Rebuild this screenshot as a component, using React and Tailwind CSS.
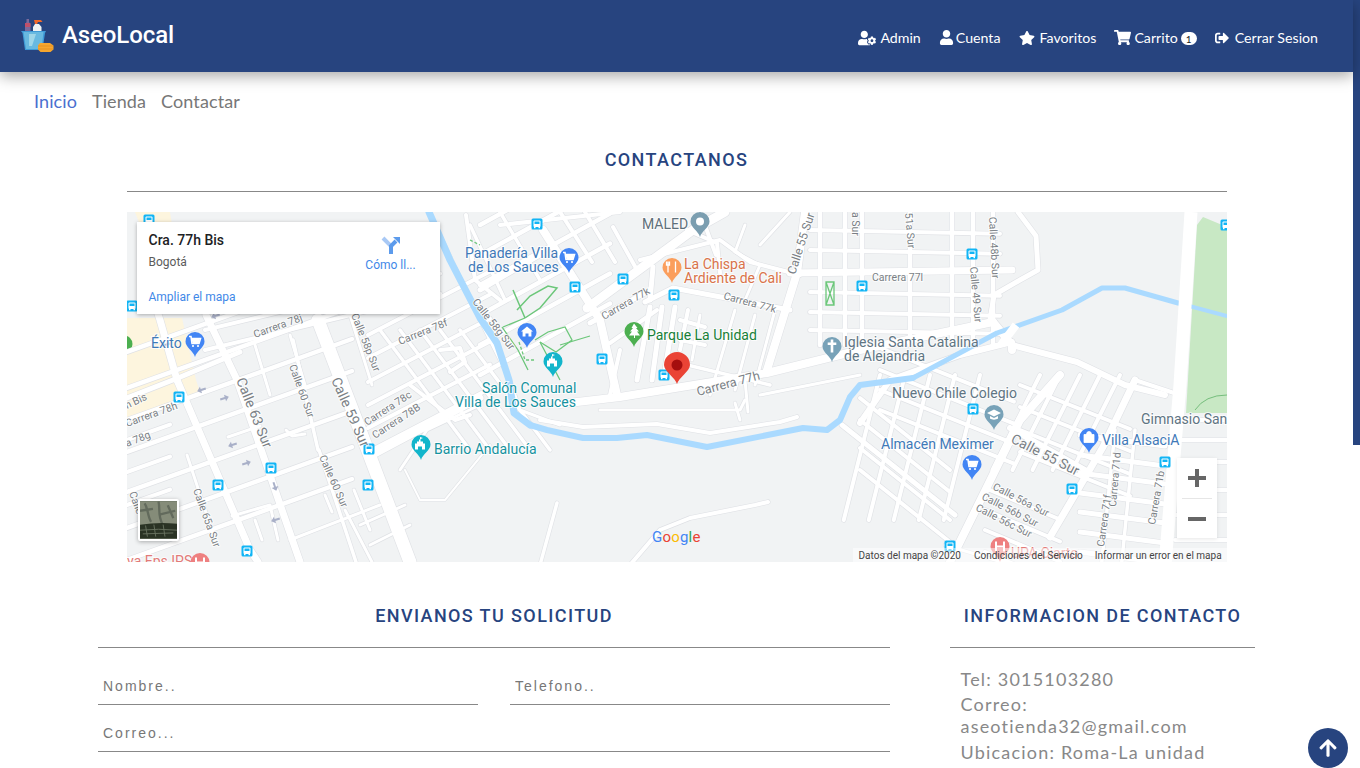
import React from "react";
import { FaUserCog, FaUser, FaStar, FaShoppingCart, FaSignOutAlt, FaArrowUp } from "react-icons/fa";

const lines = (ys, x1, x2, s, w) => ys.map((y) => [`M${x1} ${y}L${x2} ${y + s * (x2 - x1)}`, w]);
const vlines = (xs, y1, y2, s, w) => xs.map((x) => [`M${x} ${y1}L${x + s * (y2 - y1)} ${y2}`, w]);

const ROADS = [
  // left quarter
  ...lines([352, 388, 420, 452, 492, 528, 560], 127, 352, -0.36, 4.5),
  ...lines([330, 350], 205, 440, -0.24, 4),
  ...lines([440, 472, 505], 127, 170, -0.36, 4),
  ["M228 437L260 426", 3],
  ["M286 430L292 436L305 434", 3],
  ["M187 455L215 540", 3],
  ["M319 450L356 562", 3.5],
  ["M293 340L318 450", 3.5],
  ["M325 495L332 512", 3],
  ["M354 490L370 530", 3],
  ["M232 516L270 505L278 540", 3],
  ["M255 520L262 540", 3],
  ["M290 540L380 505", 3],
  ["M345 510L372 562", 3],
  ["M360 525L405 505", 3],
  ["M370 545L410 525", 3],
  ["M177 380L160 320L150 290", 7],
  ["M177 380L250 550L258 562", 7],
  ["M206 315L237 380L300 562", 7],
  ["M318 320L360 430L410 562", 13],
  ["M127 398L178 378L240 352", 5],
  ["M350 315L372 385", 3],
  ["M255 345L270 395", 3],
  ["M290 335L305 385", 3],
  // centre-left
  ...lines([452, 428, 405, 382, 358, 335], 368, 490, -0.52, 4),
  ...vlines([380, 400, 420, 440, 460], 330, 450, 0.75, 3.5),
  ["M410 385L455 420L470 415", 4],
  ["M400 470L427 430L480 405", 3],
  ["M405 470L420 500L445 500L490 445", 2],
  ["M373 455L480 398", 7],
  ["M440 350L460 348L465 362L450 372", 4],
  ["M466 215L475 280L500 300", 4],
  ["M440 235L480 320L510 380L520 410L560 425", 3],
  // centre top
  ["M587 308L693 230L725 212", 9],
  ...lines([255, 225, 285, 315, 345, 375], 480, 610, -0.55, 4.5),
  ["M500 225L620 212", 4],
  ["M543 230L600 320L617 395", 8],
  ["M480 290L543 253", 5],
  ["M470 225L505 300", 3.5],
  ["M500 212L540 280", 3.5],
  ["M560 212L592 262", 4],
  ["M585 212L615 262", 4],
  ["M613 227L637 270", 4],
  ["M590 323L650 290", 5],
  ["M610 343L657 310", 4],
  ["M653 267L650 300", 5],
  ["M650 307L637 380", 5],
  ["M662 307L652 380", 5],
  ["M675 307L665 370", 5],
  ["M620 350L610 395", 4],
  ["M688 310L680 350", 4],
  ["M700 315L692 360", 3],
  ["M645 302L673 288L790 310", 5],
  ["M680 320L705 327", 4],
  ["M680 340L705 345", 4],
  ["M675 362L770 385", 3.5],
  ["M687 230L717 243L720 273", 4],
  ["M640 260L720 240L750 262L800 275", 4],
  ["M700 212L716 255", 4],
  ["M735 310L710 395", 3],
  ["M755 315L735 390", 3],
  ["M775 310L755 385", 3],
  ["M760 245L790 212", 3],
  ["M745 225L735 252L760 265L745 300", 3],
  // Carrera 77h
  ["M560 404L620 397L767 373L860 350L993 322", 8],
  ["M600 410L740 410L745 400", 3],
  ["M735 403L740 420", 3],
  ["M540 420L583 427L657 424L710 433L780 422L797 417", 4],
  ["M760 395L860 375", 3],
  ["M745 380L748 412", 3],
  // calle 55
  ["M805 212L797 273L767 370", 8],
  ["M790 273L1012 270", 7],
  // upper-right grid
  ...vlines([820, 845, 862, 910, 952, 973, 993], 212, 345, 0, 4.5),
  ...lines([230, 250, 292, 312, 330], 810, 1000, 0.02, 4),
  ["M1018 212L1036 236L1038 270L1020 280L994 295L990 320", 5],
  ["M993 322L1012 345L1012 350", 8],
  ["M1012 345L1077 362L1125 385L1165 395", 6],
  ["M860 423L890 380L960 355L1012 342", 6],
  // lower right
  ["M950 562L1020 420L1060 375", 8],
  ["M842 425L955 515", 5],
  ["M1050 537L1103 447L1135 380", 7],
  ["M1010 428L1085 470", 6],
  ["M1135 380L1180 395", 4],
  ...lines([348, 370, 390, 410], 880, 1014, 0.4, 4),
  ...lines([398, 420, 448, 470], 860, 950, 0.8, 4),
  ...vlines([880, 905, 930, 955, 980], 375, 520, -0.25, 4),
  ...lines([385, 407, 430, 452], 1020, 1130, 0.4, 4),
  ...vlines([1040, 1060, 1080, 1100, 1120], 375, 470, -0.5, 4),
  ...lines([488, 510, 530, 552], 985, 1060, 0.42, 4),
  ...lines([435, 455, 473, 493, 512, 532, 552], 1080, 1165, 0.13, 5),
  ...vlines([1115, 1135], 430, 562, -0.1, 3.5),
  ...lines([420, 440, 462, 490, 515, 540], 1175, 1227, 0, 4),
  ...lines([545], 945, 1030, 0.3, 3),
  // bottom centre
  ["M630 565L660 530L690 518L755 505L768 502", 4],
  ["M557 503L540 565", 3.5],
];

const RIVER = [
  ["M429 212L450 260L480 318L497 343L509 380L514 413L530 425", 7],
  ["M530 425L547 430L583 438L617 438L647 435L707 447L803 428L827 430L840 420L850 397L860 385L913 378", 6],
  ["M913 378L997 333L1062 310L1102 288L1125 288L1178 303", 5],
  ["M1178 303L1227 316", 4],
];

const GLYPHS = {
  cart: <path d="M-6 -5h2l1 7h7l1.500-5h-9" fill="none" stroke="#fff" strokeWidth="1.600" />,
  house: <path d="M0 -6l6 5h-1.600v5h-2.900v-3h-3v3h-2.900v-5h-1.600z" fill="#fff" />,
  tree: <path d="M0 -8l3.500 4.500h-1.500l3 3.500h-2l3 4h-5v2.500h-1v-2.500h-5l3-4h-2l3-3.500h-1.500z" fill="#fff" />,
  dot: <circle r="4" fill="#fff" />,
  cross: <path d="M-1.300 -7h2.600v3h3v2.500h-3v7.500h-2.600v-7.500h-3v-2.500h3z" fill="#fff" />,
  grad: <path d="M-7 -1.500l7-3.500l7 3.500l-7 3.500zM-4 1.500v2.500c2 1.500 6 1.500 8 0v-2.500l-4 2z" fill="#fff" />,
  bag: <path d="M-5 -3h10v8h-10zM-2.500 -3a2.500 3 0 0 1 5 0" fill="#fff" stroke="#fff" strokeWidth=".8" />,
  fork: <path d="M-4 -6v11M-5.500 -6v3.500h3v-3.500M3.500 -6v11" stroke="#fff" strokeWidth="1.300" fill="none" />,
  castle: <path d="M-6 5v-6h2v-2h2v-2h1v-2.500l3 1l-2.500 1v2.500h2.500v2h2v6h-3v-3h-4v3z" fill="#fff" />,
  h: <path d="M-4 -5v10M4 -5v10M-4 0h8" stroke="#fff" strokeWidth="2" fill="none" />,
};

function Pin({ x, tip, color, glyph, r = 9.500, dark }) {
  const cy = tip - r - 6;
  return (
    <g>
      <path
        d={`M${x} ${tip}C${x - 1.500} ${tip - 6} ${x - r} ${cy + 6} ${x - r} ${cy}A${r} ${r} 0 1 1 ${x + r} ${cy}C${x + r} ${cy + 6} ${x + 1.500} ${tip - 6} ${x} ${tip}Z`}
        fill={color}
      />
      {dark ? <circle cx={x} cy={cy} r="5.500" fill={dark} /> : <g transform={`translate(${x} ${cy})`}>{GLYPHS[glyph]}</g>}
      {glyph === "cart" && (
        <g fill="#fff">
          <circle cx={x - 2} cy={cy + 4.500} r="1.100" />
          <circle cx={x + 3} cy={cy + 4.500} r="1.100" />
          <path d={`M${x - 3.500} ${cy - 3}h8.500l-1.200 4.500h-6.300z`} />
        </g>
      )}
    </g>
  );
}

const BUSES = [
  [149, 220], [537, 224], [575, 287], [623, 279], [674, 295], [132, 306], [602, 359], [664, 375], [179, 397],
  [369, 449], [271, 468], [218, 485], [368, 485], [247, 551], [862, 286], [972, 254], [1226, 225], [973, 409],
  [1165, 462], [1072, 489], [950, 546],
];

function Bus({ x, y }) {
  return (
    <g transform={`translate(${x} ${y})`}>
      <rect x="-5.500" y="-5.500" width="11" height="11" rx="1.500" fill="#12b5f5" />
      <rect x="-3.500" y="-3.500" width="7" height="6.500" rx="1" fill="#fff" />
      <rect x="-2.500" y="-2.500" width="5" height="2.500" fill="#12b5f5" />
      <rect x="-3" y="3" width="1.500" height="1.200" fill="#fff" />
      <rect x="1.500" y="3" width="1.500" height="1.200" fill="#fff" />
    </g>
  );
}

const L = ({ x, y, s = 14, c = "#5f6368", r, children }) => (
  <text
    x={x}
    y={y}
    fontSize={s}
    fill={c}
    stroke="#fff"
    strokeOpacity=".75"
    strokeWidth="2"
    paintOrder="stroke"
    transform={r ? `rotate(${r} ${x} ${y})` : undefined}
  >
    {children}
  </text>
);

const BLUE = "#3f79b8";
const TEAL = "#15929f";
const GREY = "#7a7f85";
const SLATE = "#5f7583";

const ARROWS = [[201, 390, 180], [225, 398, 0], [232, 445, 180], [247, 463, 0], [275, 520, 180], [275, 487, 90], [215, 316, 180], [165, 345, 180]];

function GoogleMap() {
  return (
    <svg viewBox="127 212 1100 350" className="block h-full w-full" style={{ fontFamily: "Roboto, sans-serif" }}>
      <rect x="127" y="212" width="1100" height="350" fill="#f1f3f4" />
      <path d="M127 318L182 318L196 380L200 392L127 418Z" fill="#fdf5de" />
      <path d="M135 212H170L172 225H140Z" fill="#fdf5de" />
      <path d="M1203 217L1227 227V413H1186L1197 225Z" fill="#c8e8c4" />
      <circle cx="124" cy="344" r="8.500" fill="#4caf50" />
      {ROADS.map(([d, w], i) => (
        <path key={i} d={d} fill="none" stroke="#dfe1e5" strokeWidth={w + 1.200} strokeLinecap="round" strokeLinejoin="round" />
      ))}
      {ROADS.map(([d, w], i) => (
        <path key={i} d={d} fill="none" stroke="#fff" strokeWidth={w} strokeLinecap="round" strokeLinejoin="round" />
      ))}
      {RIVER.map(([d, w], i) => (
        <path key={i} d={d} fill="none" stroke="#aadaff" strokeWidth={w} strokeLinejoin="round" strokeLinecap="round" />
      ))}
      <path d="M1001 345L1016 325" stroke="#fff" strokeWidth="8" />
      <path d="M1191 212L1180 385L1165 565" fill="none" stroke="#fff" strokeWidth="13" />
      {/* park paths */}
      <g fill="none" stroke="#6cc77a" strokeWidth="1.300">
        <path d="M513 290L525 318M517 310L530 296L548 286L557 288L540 308L525 318" strokeWidth="1.500" />
        <path d="M503 327L525 318M502 327L518 350L528 370M535 340L548 332L565 327L572 340L556 352L540 342" />
        <path d="M540 342L560 380M560 345L590 336" />
        <path d="M519 342L525 360L535 360" strokeDasharray="3 2" />
        <path d="M826 282H834V305H826ZM826 282L834 305M834 282L826 305" />
        <path d="M470 240L480 245" strokeDasharray="3 2" />
      </g>
      <path d="M1195 410Q1205 395 1227 395" stroke="#5fb36a" strokeWidth=".8" fill="none" />
      {ARROWS.map(([x, y, r], i) => (
        <path key={i} transform={`translate(${x} ${y}) rotate(${r - 18})`} d="M-5 -1h5v-2.500l4 3.500l-4 3.500v-2.500h-5z" fill="#a9b0c8" />
      ))}
      {BUSES.map(([x, y], i) => (
        <Bus key={i} x={x} y={y} />
      ))}

      <L x={642} y={229} c="#5f6f7a">MALED</L>
      <L x={465} y={258} c={BLUE}>Panadería Villa</L>
      <L x={468} y={272} c={BLUE}>de Los Sauces</L>
      <L x={684} y={269} c="#d9734a">La Chispa</L>
      <L x={684} y={283} c="#d9734a">Ardiente de Cali</L>
      <L x={647} y={340} c="#188038">Parque La Unidad</L>
      <L x={482} y={393} c={TEAL}>Salón Comunal</L>
      <L x={455} y={407} c={TEAL}>Villa de Los Sauces</L>
      <L x={844} y={347} c={SLATE}>Iglesia Santa Catalina</L>
      <L x={844} y={361} c={SLATE}>de Alejandria</L>
      <L x={892} y={398} c={SLATE}>Nuevo Chile Colegio</L>
      <L x={1141} y={424} c={SLATE}>Gimnasio San</L>
      <L x={881} y={449} c={BLUE}>Almacén Meximer</L>
      <L x={1102} y={445} c={BLUE}>Villa AlsaciA</L>
      <L x={151} y={348} c={BLUE}>Éxito</L>
      <L x={434} y={454} c={TEAL}>Barrio Andalucía</L>
      <L x={1011} y={558} c="#e27a78">UPA Ciarto</L>
      <L x={127} y={566} c="#e27a78">va Eps IPS</L>

      <L x={698} y={396} s={12.500} c={GREY} r={-15}>Carrera 77h</L>
      <L x={604} y={320} s={10.500} c={GREY} r={-30}>Carrera 77k</L>
      <L x={723} y={299} s={10.500} c={GREY} r={15}>Carrera 77k</L>
      <L x={795} y={275} s={12} c={GREY} r={-72}>Calle 55 Sur</L>
      <L x={872} y={281} s={10.500} c={GREY}>Carrera 77l</L>
      <L x={989} y={217} s={10.500} c={GREY} r={87}>Calle 48b Sur</L>
      <L x={970} y={267} s={10.500} c={GREY} r={85}>Calle 49 Sur</L>
      <L x={905} y={213} s={10.500} c={GREY} r={85}>51a Sur</L>
      <L x={852} y={212} s={10.500} c={GREY} r={90}>a Sur</L>
      <L x={1010} y={442} s={14} c={GREY} r={27}>Calle 55 Sur</L>
      <L x={992} y={489} s={10.500} c={GREY} r={27}>Calle 56a Sur</L>
      <L x={981} y={499} s={10.500} c={GREY} r={27}>Calle 56b Sur</L>
      <L x={975} y={510} s={10.500} c={GREY} r={27}>Calle 56c Sur</L>
      <L x={1116} y={507} s={10.500} c={GREY} r={-85}>Carrera 71d</L>
      <L x={1104} y={547} s={10.500} c={GREY} r={-82}>Carrera 71f</L>
      <L x={1155} y={525} s={10.500} c={GREY} r={-80}>Carrera 71b</L>
      <L x={255} y={338} s={10.500} c={GREY} r={-20}>Carrera 78j</L>
      <L x={400} y={345} s={10.500} c={GREY} r={-22}>Carrera 78f</L>
      <L x={351} y={315} s={10.500} c={GREY} r={68}>Calle 58p Sur</L>
      <L x={472} y={302} s={10.500} c={GREY} r={52}>Calle 58g Sur</L>
      <L x={236} y={380} s={14} c={GREY} r={68}>Calle 63 Sur</L>
      <L x={331} y={380} s={14} c={GREY} r={66}>Calle 59 Sur</L>
      <L x={289} y={366} s={10.500} c={GREY} r={70}>Calle 60 Sur</L>
      <L x={319} y={457} s={10.500} c={GREY} r={66}>Calle 60 Sur</L>
      <L x={193} y={490} s={10.500} c={GREY} r={70}>Calle 65a Sur</L>
      <L x={129} y={493} s={10.500} c={GREY} r={70}>Calle</L>
      <L x={127} y={427} s={10.500} c={GREY} r={-20}>Carrera 78h</L>
      <L x={127} y={409} s={10.500} c={GREY} r={-25}>n Bis</L>
      <L x={127} y={447} s={10.500} c={GREY} r={-22}>a 78g</L>
      <L x={367} y={426} s={10.500} c={GREY} r={-33}>Carrera 78c</L>
      <L x={375} y={439} s={10.500} c={GREY} r={-33}>Carrera 78B</L>

      <Pin x={700} tip={237} color="#7b9eb0" glyph="dot" />
      <Pin x={569} tip={273} color="#4285f4" glyph="cart" />
      <Pin x={672} tip={283} color="#fb9e5c" glyph="fork" />
      <Pin x={634} tip={347} color="#4caf50" glyph="tree" />
      <Pin x={527} tip={348} color="#4285f4" glyph="house" />
      <Pin x={553} tip={377} color="#12b5cb" glyph="castle" />
      <Pin x={832} tip={362} color="#78a2b8" glyph="cross" />
      <Pin x={994} tip={430} color="#78a2b8" glyph="grad" />
      <Pin x={972} tip={480} color="#4285f4" glyph="cart" />
      <Pin x={1089} tip={453} color="#4285f4" glyph="bag" />
      <Pin x={195} tip={357} color="#4285f4" glyph="cart" />
      <Pin x={421} tip={460} color="#12b5cb" glyph="castle" />
      <Pin x={1000} tip={562} color="#ee8080" glyph="h" />
      <Pin x={200} tip={578} color="#ee8080" glyph="h" />
      <Pin x={677} tip={384} color="#ea4335" r={13} dark="#a50e0e" />

      <text x="652" y="542" fontSize="15" letterSpacing="0.2">
        <tspan fill="#4285f4">G</tspan>
        <tspan fill="#ea4335">o</tspan>
        <tspan fill="#fbbc05">o</tspan>
        <tspan fill="#4285f4">g</tspan>
        <tspan fill="#34a853">l</tspan>
        <tspan fill="#ea4335">e</tspan>
      </text>
    </svg>
  );
}

function MapPanel() {
  return (
    <div className="relative h-[350px] w-[1100px] overflow-hidden">
      <GoogleMap />
      <div className="absolute left-[10px] top-[10px] h-[92px] w-[303px] bg-white font-['Roboto',sans-serif] shadow-[0_1px_4px_rgba(0,0,0,0.3)]">
        <div className="absolute left-[12px] top-[10px] text-[14px] font-medium leading-[17px] text-[#202124]">Cra. 77h Bis</div>
        <div className="absolute left-[12px] top-[33px] text-[12px] leading-[14px] text-[#5b5b5b]">Bogotá</div>
        <div className="absolute bottom-[10px] left-[12px] text-[12px] leading-[14px] text-[#3f88e8]">Ampliar el mapa</div>
        <div className="absolute left-[229px] top-[13px] flex w-[50px] flex-col items-center">
          <svg width="20" height="20" viewBox="0 0 20 20">
            <path d="M2 3L10 11V19" fill="none" stroke="#a9c9f5" strokeWidth="4" />
            <path d="M10 19V11L15 6" fill="none" stroke="#5c9bec" strokeWidth="4" />
            <path d="M12 2H19V9Z" fill="#5c9bec" />
          </svg>
          <span className="mt-[3px] text-[12px] leading-[14px] whitespace-nowrap text-[#3f88e8]">Cómo ll...</span>
        </div>
      </div>
      <div className="absolute bottom-[21px] left-[11px] h-[42px] w-[41px] rounded-[2px] border-2 border-white bg-[#6a7464] shadow-[0_1px_4px_rgba(0,0,0,0.3)]">
        <svg viewBox="0 0 40 40" className="h-full w-full">
          <rect width="40" height="40" fill="#858c79" />
          <path d="M5 2C9 8 8 16 12 22M20 0C22 8 19 14 24 24M30 4L36 18M0 10L14 8M22 14L38 10" stroke="#626a5c" strokeWidth="2.500" fill="none" />
          <path d="M0 25Q20 22 40 24V40H0Z" fill="#2a3324" />
          <path d="M0 31Q20 29 40 31M3 35L36 34M6 26L8 38M15 25L17 38M25 25L27 38" stroke="#68725f" strokeWidth="1" fill="none" />
        </svg>
      </div>
      <div className="absolute right-[10px] top-[246px] flex h-[80px] w-[40px] flex-col items-center bg-white shadow-[0_1px_4px_rgba(0,0,0,0.1)]">
        <svg width="20" height="40" viewBox="0 0 20 40">
          <path d="M10 11V29M1 20H19" stroke="#666" strokeWidth="4" />
        </svg>
        <div className="h-px w-[30px] bg-[#e6e6e6]" />
        <svg width="20" height="39" viewBox="0 0 20 39">
          <path d="M1 20H19" stroke="#666" strokeWidth="4" />
        </svg>
      </div>
      <div className="absolute bottom-0 right-0 flex h-[14px] w-[374px] items-center bg-white/50 pl-[6px] font-['Roboto',sans-serif] text-[10px] text-[#444]">
        <span>Datos del mapa ©2020</span>
        <span className="ml-[13px]">Condiciones del Servicio</span>
        <span className="ml-[12px]">Informar un error en el mapa</span>
      </div>
    </div>
  );
}

function Logo() {
  return (
    <svg width="33" height="35" viewBox="0 0 33 35" className="shrink-0">
      <path d="M4 6.500l1.500-2.500v-3h2.500v3l1.500 2.500v8h-5.500z" fill="#7a6a9c" />
      <path d="M4 5h5.500v4h-5.500z" fill="#c0506a" />
      <path d="M13 2h7l1.500 2h-4.500l-1 2h-2z" fill="#f0682a" />
      <path d="M14 6h4l2.500 3v6h-8.500v-6z" fill="#eef1f2" />
      <path d="M0 13h25l-1 2-2.500 17h-17.500l-2.500-17z" fill="#3f9bd8" />
      <path d="M2.500 14h20l-2 17h-15.500z" fill="#68b9e0" />
      <path d="M8 16h7l-4 12h-3z" fill="#9fd6e8" />
      <path d="M19 25h10l3.500 2.500v4l-3 2.500h-10l-2.500-2.500v-4z" fill="#f6a62e" />
      <path d="M17 28h15M17 31h15" stroke="#dd8a1c" strokeWidth=".7" />
    </svg>
  );
}

const NAV = [
  [FaUserCog, "Admin", 22, 18],
  [FaUser, "Cuenta", 17, 15],
  [FaStar, "Favoritos", 21, 16],
  [FaShoppingCart, "Carrito", 20, 17],
];

function Heading({ children }) {
  return (
    <div>
      <h2 className="h-[48px] pt-[3px] text-center font-['Roboto',sans-serif] text-[18px] leading-[27px] font-medium tracking-[1.4px] text-[#27447f]">{children}</h2>
      <div className="h-px bg-[#888]" />
    </div>
  );
}

const inputCls =
  "h-[38px] w-full border-b border-[#888] bg-transparent px-[5px] font-['Liberation_Sans',sans-serif] text-[14px] tracking-[2px] outline-none placeholder:text-[#777]";

export default function App() {
  return (
    <div className="relative flex h-screen overflow-hidden bg-white font-['Lato',sans-serif]">
      <div className="min-w-0 flex-1">
        <header className="relative z-10 flex h-[72px] items-center justify-between bg-[#27447f] pl-[21px] pr-[35px] shadow-[0_4px_14px_rgba(0,0,0,0.35)]">
          <div className="flex items-center gap-[8px] pb-[2px]">
            <Logo />
            <span className="font-['Roboto',sans-serif] text-[24px] font-medium tracking-[-0.1px] text-white">AseoLocal</span>
          </div>
          <nav className="flex items-center gap-[18px] pt-[4px] text-[14.2px] text-white">
            {NAV.map(([Icon, label, w, size]) => (
              <a key={label} className="flex items-center">
                <span className="flex justify-start" style={{ width: w }}>
                  <Icon size={size} />
                </span>
                {label}
                {label === "Carrito" && (
                  <span className="ml-[3px] mt-[2px] flex h-[13px] w-[16px] items-center justify-center rounded-full bg-white text-[10px] leading-none text-[#222]">1</span>
                )}
              </a>
            ))}
            <a className="flex items-center">
              <span className="w-[20px]">
                <FaSignOutAlt size={14} />
              </span>
              Cerrar Sesion
            </a>
          </nav>
        </header>
        <nav className="flex h-[60px] items-center gap-[15px] pb-[1px] pl-[34px] text-[18px] tracking-[0.1px] text-[#777]">
          <a className="text-[#4a70cf]">Inicio</a>
          <a>Tienda</a>
          <a>Contactar</a>
        </nav>
        <section className="mx-auto mt-[11px] w-[1100px]">
          <Heading>CONTACTANOS</Heading>
          <div className="mt-[20px]">
            <MapPanel />
          </div>
        </section>
        <section className="mx-auto mt-[37px] flex w-[1157px] justify-between">
          <div className="w-[792px]">
            <Heading>ENVIANOS TU SOLICITUD</Heading>
            <form className="mt-[19px] grid grid-cols-2 gap-x-[32px] gap-y-[9px]">
              <input className={inputCls} placeholder="Nombre.." />
              <input className={inputCls} placeholder="Telefono.." />
              <input className={`${inputCls} col-span-2`} placeholder="Correo..." />
            </form>
          </div>
          <div className="w-[305px]">
            <Heading>INFORMACION DE CONTACTO</Heading>
            <div className="mt-[20px] px-[10.5px] text-[18px] leading-[22px] tracking-[1.2px] text-[#888]">
              <p className="mb-[3px]">Tel: 3015103280</p>
              <p className="mb-[4px]">
                Correo:
                <br />
                aseotienda32@gmail.com
              </p>
              <p>Ubicacion: Roma-La unidad</p>
            </div>
          </div>
        </section>
      </div>
      <div className="w-[7px] shrink-0">
        <div className="h-[445px] bg-[#27447f]" />
      </div>
      <button className="absolute bottom-0 right-[12px] flex h-[40px] w-[40px] items-center justify-center rounded-full bg-[#27447f] text-white">
        <FaArrowUp size={20} />
      </button>
    </div>
  );
}
